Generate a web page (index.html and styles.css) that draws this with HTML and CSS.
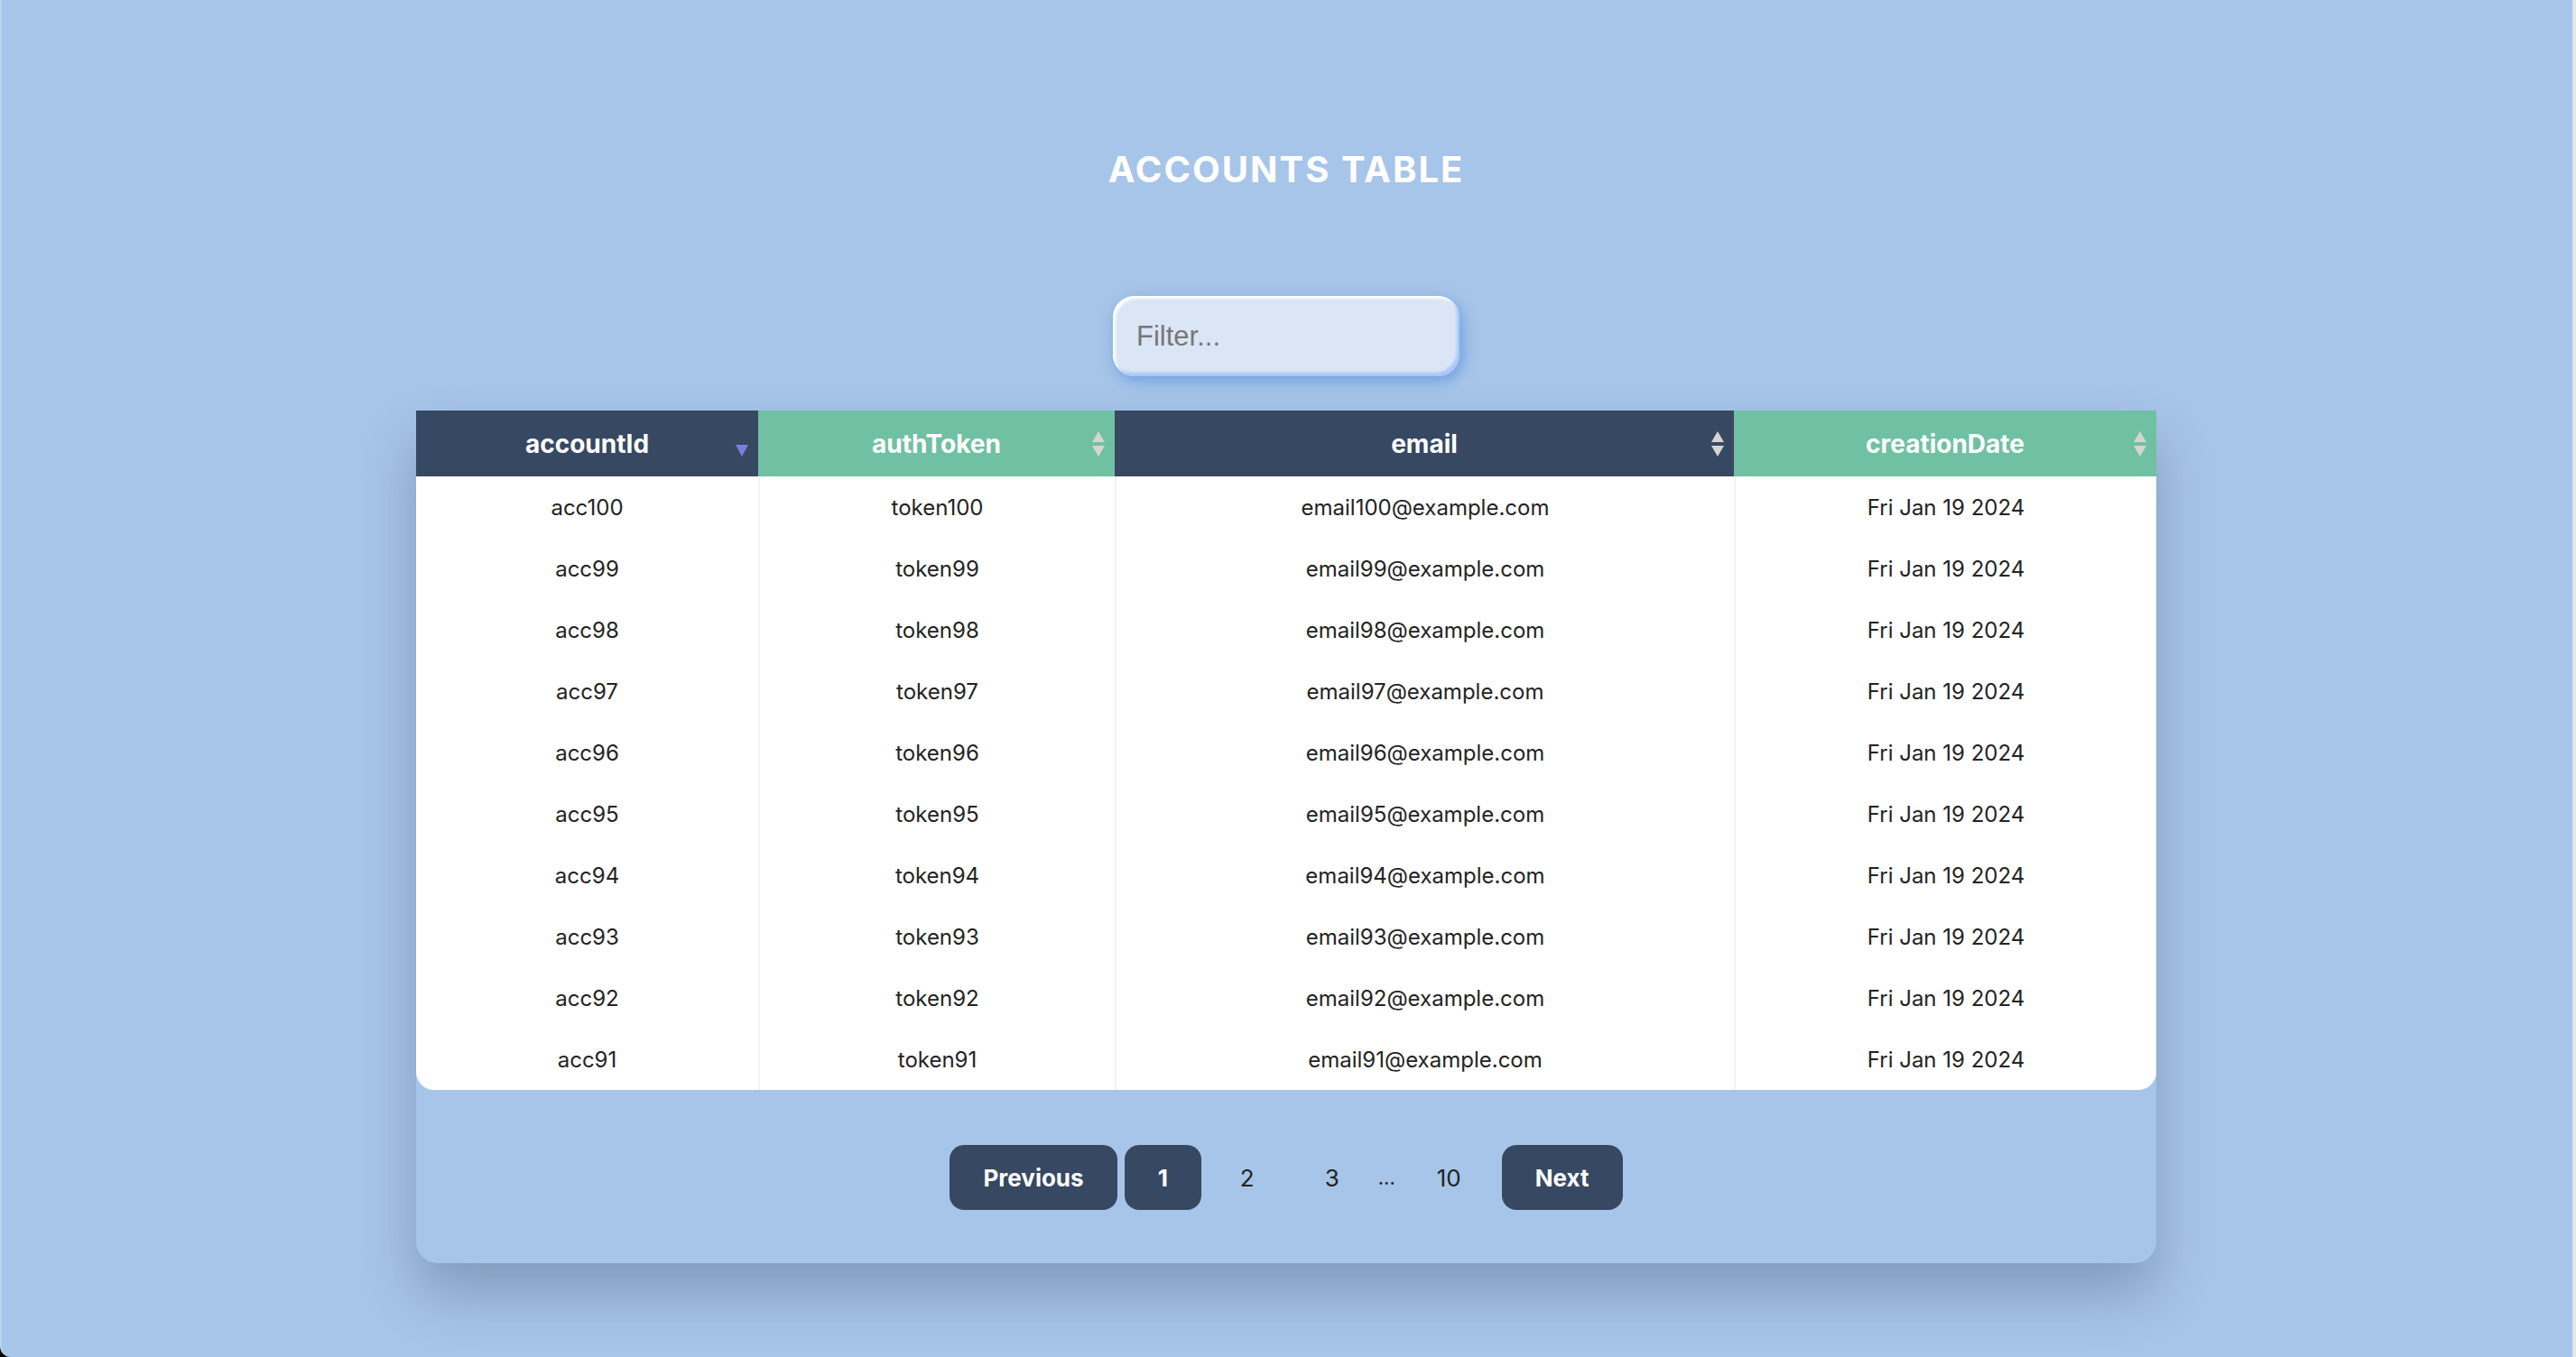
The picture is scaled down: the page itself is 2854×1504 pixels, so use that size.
FILE: index.html
```html
<!DOCTYPE html>
<html lang="en">
<head>
<meta charset="utf-8">
<title>Accounts Table</title>
<link rel="stylesheet" href="styles.css">
</head>
<body>
<div class="window">
  <h1 class="title">ACCOUNTS TABLE</h1>
  <div class="filter-row">
    <input class="filter" type="text" placeholder="Filter...">
  </div>
  <div class="card">
    <table class="grid">
      <colgroup>
        <col class="c1"><col class="c2"><col class="c3"><col class="c4">
      </colgroup>
      <thead>
        <tr>
          <th class="dark">accountId
            <svg class="sort" viewBox="0 0 16 30" width="16" height="30"><polygon class="active" points="1,16 15,16 8,29"/></svg>
          </th>
          <th class="green">authToken
            <svg class="sort" viewBox="0 0 16 30" width="16" height="30"><polygon class="idle" points="1,13 8,1 15,13"/><polygon class="idle" points="1,17 15,17 8,29"/></svg>
          </th>
          <th class="dark">email
            <svg class="sort" viewBox="0 0 16 30" width="16" height="30"><polygon class="idle" points="1,13 8,1 15,13"/><polygon class="idle" points="1,17 15,17 8,29"/></svg>
          </th>
          <th class="green">creationDate
            <svg class="sort" viewBox="0 0 16 30" width="16" height="30"><polygon class="idle" points="1,13 8,1 15,13"/><polygon class="idle" points="1,17 15,17 8,29"/></svg>
          </th>
        </tr>
      </thead>
      <tbody>
        <tr><td>acc100</td><td>token100</td><td>email100@example.com</td><td>Fri Jan 19 2024</td></tr>
        <tr><td>acc99</td><td>token99</td><td>email99@example.com</td><td>Fri Jan 19 2024</td></tr>
        <tr><td>acc98</td><td>token98</td><td>email98@example.com</td><td>Fri Jan 19 2024</td></tr>
        <tr><td>acc97</td><td>token97</td><td>email97@example.com</td><td>Fri Jan 19 2024</td></tr>
        <tr><td>acc96</td><td>token96</td><td>email96@example.com</td><td>Fri Jan 19 2024</td></tr>
        <tr><td>acc95</td><td>token95</td><td>email95@example.com</td><td>Fri Jan 19 2024</td></tr>
        <tr><td>acc94</td><td>token94</td><td>email94@example.com</td><td>Fri Jan 19 2024</td></tr>
        <tr><td>acc93</td><td>token93</td><td>email93@example.com</td><td>Fri Jan 19 2024</td></tr>
        <tr><td>acc92</td><td>token92</td><td>email92@example.com</td><td>Fri Jan 19 2024</td></tr>
        <tr><td>acc91</td><td>token91</td><td>email91@example.com</td><td>Fri Jan 19 2024</td></tr>
      </tbody>
    </table>
    <nav class="pager">
      <button class="btn solid">Previous</button>
      <button class="btn solid">1</button>
      <button class="btn plain">2</button>
      <button class="btn plain">3</button>
      <span class="dots">...</span>
      <button class="btn plain wide">10</button>
      <button class="btn solid">Next</button>
    </nav>
  </div>
</div>
<div class="edge"></div>
</body>
</html>
```

FILE: styles.css
```css
html, body {
  margin: 0;
  padding: 0;
  height: 1504px;
  overflow: hidden;
}

body {
  display: flex;
  background: #000;
  font-family: Inter, "Noto Sans", sans-serif;
}

.window {
  flex: 1;
  height: 1504px;
  box-sizing: border-box;
  background: #a7c5e8;
  border-left: 2px solid #bcd2ef;
  border-bottom-left-radius: 12px;
  padding-top: 164px;
  display: flex;
  flex-direction: column;
  align-items: center;
}

.edge {
  width: 6px;
  height: 1504px;
  background: linear-gradient(to right, #a7c5e8 0, #a7c5e8 2px, #e6e6e6 2px);
}

.title {
  margin: 0;
  font-size: 40px;
  line-height: 48px;
  font-weight: 700;
  letter-spacing: 2px;
  color: #ffffff;
}

.filter-row {
  margin-top: 116px;
}

.filter {
  display: block;
  width: 384px;
  height: 89px;
  box-sizing: border-box;
  padding: 0 0 0 26px;
  border: none;
  border-radius: 24px;
  background: #dae6f6;
  font-family: "Liberation Sans", Arial, sans-serif;
  font-size: 31px;
  color: #333;
  outline: none;
  box-shadow:
    inset 3px 3px 3px #ffffff,
    inset -3px -4px 3px #a9c7f6,
    3px 5px 16px rgba(90, 145, 225, 0.75);
}

.filter::placeholder {
  color: #777;
}

.card {
  margin-top: 38px;
  width: 1928px;
  background: #a7c5e8;
  border-radius: 0 0 24px 24px;
  box-shadow: 0 34px 60px rgba(50, 70, 100, 0.32);
}

.grid {
  width: 1928px;
  border-collapse: separate;
  border-spacing: 0;
  table-layout: fixed;
}

.c1 { width: 379px; }
.c2 { width: 395px; }
.c3 { width: 686px; }
.c4 { width: 468px; }

.grid th {
  position: relative;
  height: 73px;
  padding: 0;
  font-size: 28px;
  font-weight: 700;
  color: #ffffff;
  text-align: center;
}

.grid th.dark { background: #374862; }
.grid th.green { background: #70c0a3; }

.sort {
  position: absolute;
  right: 10px;
  top: 22px;
}

.sort .idle { fill: #d5d5d5; }
.sort .active { fill: #7b7fd6; }

.grid td {
  height: 68px;
  padding: 0;
  background: #ffffff;
  font-size: 24px;
  color: #232323;
  text-align: center;
}

.grid td + td {
  border-left: 2px solid #f3f3f3;
}

.grid tbody tr:last-child td:first-child {
  border-bottom-left-radius: 20px;
}

.grid tbody tr:last-child td:last-child {
  border-bottom-right-radius: 20px;
}

.pager {
  display: flex;
  justify-content: center;
  align-items: center;
  gap: 8px;
  padding: 61px 0 59px;
}

.btn {
  height: 72px;
  padding: 0 37px;
  border: none;
  border-radius: 16px;
  font-family: Inter, "Noto Sans", sans-serif;
  font-size: 26px;
}

.btn.solid {
  background: #374862;
  color: #ffffff;
  font-weight: 700;
}

.btn.plain {
  padding: 0 35px;
  background: transparent;
  color: #222;
  font-weight: 400;
}

.btn.plain.wide {
  padding: 0 37px 0 38px;
}

.dots {
  font-size: 22px;
  color: #222;
}
```
